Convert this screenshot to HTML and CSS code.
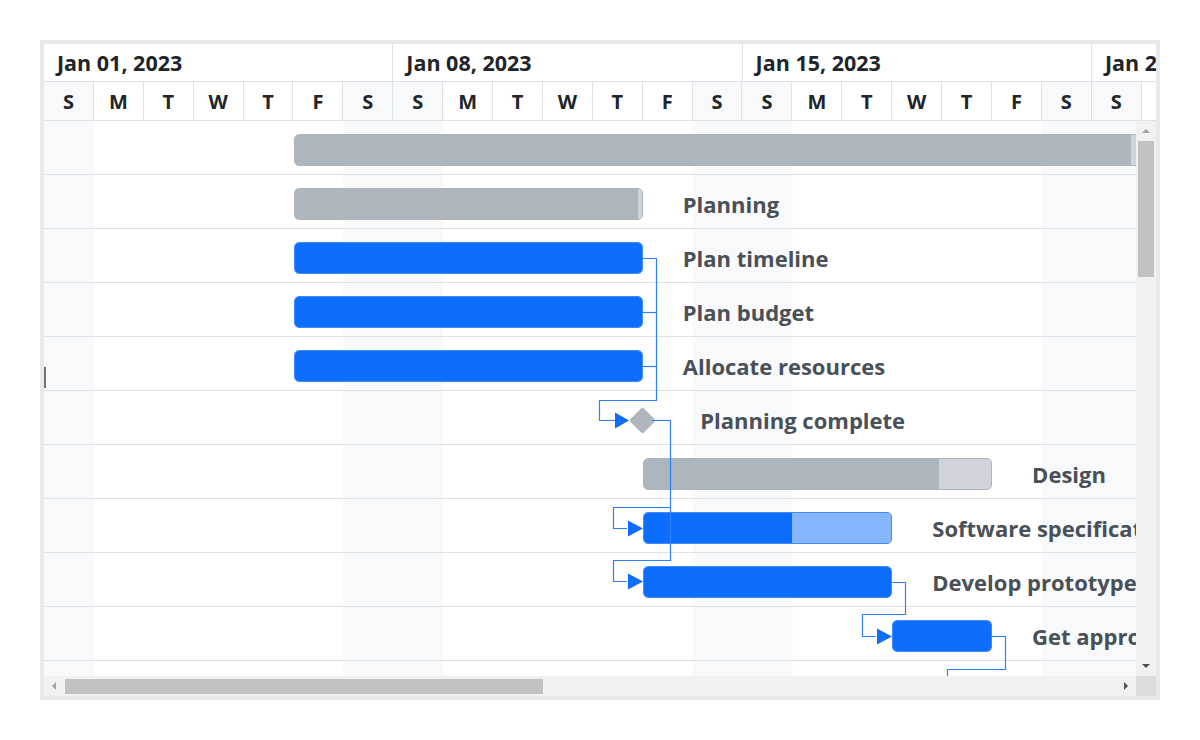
FILE: index.html
```html
<!DOCTYPE html>
<html lang="en">
<head>
<meta charset="utf-8">
<title>Project schedule</title>
<link rel="stylesheet" href="styles.css">
</head>
<body>
<div class="gantt">
  <div class="timeline-head">
    <div class="months">
      <div class="month">Jan 01, 2023</div>
      <div class="month">Jan 08, 2023</div>
      <div class="month">Jan 15, 2023</div>
      <div class="month">Jan 22, 2023</div>
    </div>
    <div class="days">
      <div class="day weekend">S</div><div class="day">M</div><div class="day">T</div><div class="day">W</div><div class="day">T</div><div class="day">F</div><div class="day weekend">S</div>
      <div class="day weekend">S</div><div class="day">M</div><div class="day">T</div><div class="day">W</div><div class="day">T</div><div class="day">F</div><div class="day weekend">S</div>
      <div class="day weekend">S</div><div class="day">M</div><div class="day">T</div><div class="day">W</div><div class="day">T</div><div class="day">F</div><div class="day weekend">S</div>
      <div class="day weekend">S</div><div class="day">M</div>
    </div>
  </div>

  <div class="timeline-body">
    <div class="viewport">
      <div class="row" style="--s:5">
        <div class="bar summary" style="--n:20"><div class="bar-done" style="width:84%"></div></div>
      </div>
      <div class="row" style="--s:5">
        <div class="bar summary" style="--n:7"><div class="bar-done" style="width:99%"></div></div>
        <span class="label">Planning</span>
      </div>
      <div class="row" style="--s:5">
        <div class="bar task" style="--n:7"><div class="bar-done" style="width:100%"></div></div>
        <span class="label">Plan timeline</span>
      </div>
      <div class="row" style="--s:5">
        <div class="bar task" style="--n:7"><div class="bar-done" style="width:100%"></div></div>
        <span class="label">Plan budget</span>
      </div>
      <div class="row" style="--s:5">
        <div class="bar task" style="--n:7"><div class="bar-done" style="width:100%"></div></div>
        <span class="label">Allocate resources</span>
      </div>
      <div class="row" style="--s:12">
        <div class="milestone"></div>
        <span class="label">Planning complete</span>
      </div>
      <div class="row" style="--s:12">
        <div class="bar summary" style="--n:7"><div class="bar-done" style="width:85%"></div></div>
        <span class="label">Design</span>
      </div>
      <div class="row" style="--s:12">
        <div class="bar task" style="--n:5"><div class="bar-done" style="width:60%"></div></div>
        <span class="label">Software specification</span>
      </div>
      <div class="row" style="--s:12">
        <div class="bar task" style="--n:5"><div class="bar-done" style="width:100%"></div></div>
        <span class="label">Develop prototype</span>
      </div>
      <div class="row" style="--s:17">
        <div class="bar task" style="--n:2"><div class="bar-done" style="width:100%"></div></div>
        <span class="label">Get approval</span>
      </div>
      <div class="row" style="--s:19"></div>

      <svg class="links" width="1092" height="555" viewBox="0 0 1092 555">
        <g class="link-lines">
          <path d="M598.8 137.5 H612.5 V279.5 H555.5 V299.5 H571"/>
          <path d="M598.8 191.5 H612.5"/>
          <path d="M598.8 245.5 H612.5"/>
          <path d="M608 299.5 H626.5 V439.5 H569.5 V460.5 H583"/>
          <path d="M626.5 386.5 H569.5 V407.5 H583"/>
          <path d="M848.3 461.5 H861.5 V493.5 H818.5 V515.5 H832"/>
          <path d="M948.1 515.5 H961.5 V548.5 H903.5 V560"/>
        </g>
        <g class="link-arrows">
          <path d="M571 291.5 L585 299.5 L571 307.5 Z"/>
          <path d="M584 399.5 L599 407.5 L584 415.5 Z"/>
          <path d="M584 452.5 L599 460.5 L584 468.5 Z"/>
          <path d="M833 507.5 L848 515.5 L833 523.5 Z"/>
        </g>
      </svg>
      <div class="grip"></div>
    </div>
    <div class="vscroll">
      <div class="sb-btn"><span class="tri tri-up"></span></div>
      <div class="vthumb"></div>
      <div class="sb-fill"></div>
      <div class="sb-btn"><span class="tri tri-down"></span></div>
    </div>
  </div>

  <div class="hscroll">
    <div class="htrack">
      <div class="sb-btn"><span class="tri tri-left"></span></div>
      <div class="hthumb"></div>
      <div class="sb-fill"></div>
      <div class="sb-btn"><span class="tri tri-right"></span></div>
    </div>
    <div class="corner"></div>
  </div>
</div>
</body>
</html>
```

FILE: styles.css
```css
:root {
  --day: 49.9px;
  --line: #dee2e6;
  --weekend: #f8f9fa;
}

* { box-sizing: border-box; }

html, body {
  margin: 0;
  background: #fff;
}

body {
  padding: 40px;
  font-family: "Open Sans", "Noto Sans", sans-serif;
}

.gantt {
  width: 1120px;
  height: 660px;
  border: 4px solid #e9e9e9;
  display: flex;
  flex-direction: column;
  background: #fff;
}

/* ---------- timeline header ---------- */
.timeline-head {
  flex: none;
  overflow: hidden;
}

.months,
.days {
  display: flex;
}

.month {
  flex: none;
  width: calc(7 * var(--day));
  height: 38px;
  padding-left: 13px;
  padding-bottom: 1px;
  display: flex;
  align-items: center;
  border-right: 1px solid var(--line);
  border-bottom: 1px solid var(--line);
  font-size: 21.5px;
  font-weight: 700;
  color: #212529;
  white-space: nowrap;
}

.day {
  flex: none;
  width: var(--day);
  height: 39px;
  display: flex;
  align-items: center;
  justify-content: center;
  border-right: 1px solid var(--line);
  border-bottom: 1px solid var(--line);
  font-size: 20px;
  font-weight: 700;
  color: #212529;
}

.day.weekend { background: var(--weekend); }

/* ---------- chart body ---------- */
.timeline-body {
  flex: 1;
  display: flex;
  min-height: 0;
}

.viewport {
  flex: 1;
  position: relative;
  overflow: hidden;
  background-image: linear-gradient(to right,
    var(--weekend) 0 var(--day),
    transparent var(--day) calc(6 * var(--day)),
    var(--weekend) calc(6 * var(--day)) calc(7 * var(--day)));
  background-size: calc(7 * var(--day)) 100%;
  background-repeat: repeat-x;
}

.row {
  height: 54px;
  display: flex;
  align-items: center;
  padding-top: 5px;
  padding-left: calc(var(--s) * var(--day));
  border-bottom: 1px solid var(--line);
}

.bar {
  flex: none;
  width: calc(var(--n) * var(--day));
  height: 32px;
  border-radius: 5px;
  overflow: hidden;
  display: flex;
}

.bar-done { height: 100%; }

.bar.summary {
  background: #ced4da;
  border: 1px solid #adb5bd;
}
.bar.summary .bar-done { background: #adb5bd; }

.bar.task {
  background: #86b7fe;
  border: 1px solid #3d8bfd;
}
.bar.task .bar-done { background: #0d6efd; }

.milestone {
  flex: none;
  width: 19px;
  height: 19px;
  margin-left: -9.5px;
  background: #adb5bd;
  border-radius: 2px;
  transform: rotate(45deg);
}

.label {
  flex: none;
  margin-left: 40px;
  font-size: 22px;
  font-weight: 700;
  color: #495057;
  white-space: nowrap;
}

.milestone + .label { margin-left: 48px; }

.links {
  position: absolute;
  left: 0;
  top: 0;
  pointer-events: none;
  overflow: visible;
}

.link-lines path {
  fill: none;
  stroke: #2f80fd;
  stroke-width: 1.2;
}

.link-arrows path {
  fill: #0d6efd;
  stroke: none;
}

/* splitter handle on the left edge */
.grip {
  position: absolute;
  left: 0;
  top: 246px;
  width: 2px;
  height: 21px;
  background: #6c757d;
}

/* ---------- scrollbars ---------- */
.vscroll {
  flex: none;
  width: 20px;
  background: #f1f1f1;
  display: flex;
  flex-direction: column;
  align-items: center;
}

.sb-btn {
  flex: none;
  width: 20px;
  height: 20px;
  display: flex;
  align-items: center;
  justify-content: center;
}

.sb-fill { flex: 1; }

.vthumb {
  flex: none;
  width: 16px;
  height: 136px;
  background: #c1c1c1;
}

.hscroll {
  flex: none;
  height: 20px;
  display: flex;
}

.htrack {
  flex: 1;
  background: #f1f1f1;
  display: flex;
  align-items: center;
}

.hthumb {
  flex: none;
  width: 478px;
  height: 15px;
  margin-left: 1px;
  background: #c1c1c1;
}

.corner {
  flex: none;
  width: 20px;
  background: #dcdcdc;
}

.tri {
  width: 0;
  height: 0;
  border: 4px solid transparent;
}

.tri-up {
  border-top: 0;
  border-bottom: 4px solid #a3a3a3;
}

.tri-down {
  border-bottom: 0;
  border-top: 4px solid #505050;
}

.tri-left {
  border-left: 0;
  border-right: 4px solid #a3a3a3;
}

.tri-right {
  border-right: 0;
  border-left: 4px solid #505050;
}
```
